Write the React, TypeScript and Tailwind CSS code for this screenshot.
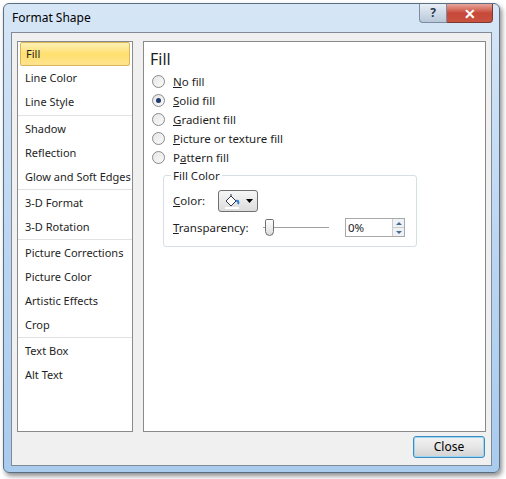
import React from "react";

const groups = [
  ["Fill", "Line Color", "Line Style"],
  ["Shadow", "Reflection", "Glow and Soft Edges"],
  ["3-D Format", "3-D Rotation"],
  ["Picture Corrections", "Picture Color", "Artistic Effects", "Crop"],
  ["Text Box", "Alt Text"],
];

const radios: [string, string, boolean][] = [
  ["N", "o fill", false],
  ["S", "olid fill", true],
  ["G", "radient fill", false],
  ["P", "icture or texture fill", false],
  ["", "Pattern fill", false],
];

function Radio({ checked }: { checked: boolean }) {
  return (
    <span className="w-[13px] h-[13px] rounded-full border border-[#8a8a8a] bg-gradient-to-br from-[#e6e6e6] to-[#fafafa] flex items-center justify-center">
      {checked && <span className="w-[5px] h-[5px] rounded-full bg-[#1f3a6e]" />}
    </span>
  );
}

export default function App() {
  return (
    <div className="w-[506px] h-[479px] bg-white relative" style={{ fontFamily: '"Noto Sans", sans-serif' }}>
      <div className="absolute left-[3px] top-[3px] w-[497px] h-[470px] rounded-[6px] border border-[#5a6e84] bg-gradient-to-b from-[#d6e6f6] via-[#bcd6f2] to-[#a9cbee] shadow-[2px_3px_5px_rgba(0,0,0,0.45)] flex flex-col">
        <div className="h-[28px] flex items-center pl-[8px] text-[12px] text-black relative">
          Format Shape
          <div className="absolute right-[6px] top-0 flex">
            <div className="w-[28px] h-[19px] rounded-bl-[4px] border border-[#7e8c9c] border-t-0 bg-gradient-to-b from-[#e8eef6] to-[#b8c8da] flex items-center justify-center text-[12px] font-bold text-[#2b3a4e]">?</div>
            <div className="w-[46px] h-[19px] rounded-br-[4px] border border-[#7a3a32] border-t-0 border-l-0 bg-gradient-to-b from-[#e8a69a] via-[#c7483a] to-[#c9523f] flex items-center justify-center text-white text-[14px] font-bold">✕</div>
          </div>
        </div>
        <div className="mx-[7px] mb-[6px] flex-1 border border-[#7f8a96] bg-[#f0f0f0] flex flex-col px-[5px] pt-[8px]">
          <div className="flex gap-[10px] h-[391px]">
            <div className="w-[116px] bg-white border border-[#8a8a8a] text-[11px] text-[#1e1e1e] whitespace-nowrap overflow-hidden">
              {groups.map((g, gi) => (
                <div key={gi} className={gi > 0 ? "border-t border-[#e2e2e2] pt-[1px]" : "pb-[1px]"}>
                  {g.map((it) =>
                    it === "Fill" ? (
                      <div key={it} className="mx-[2px] mt-[0px] h-[24px] rounded-[2px] border border-[#d8b45a] bg-gradient-to-b from-[#fff1b4] via-[#ffdf6e] to-[#ffe48e] flex items-center pl-[5px]">Fill</div>
                    ) : (
                      <div key={it} className="h-[24px] flex items-center pl-[7px]">{it}</div>
                    )
                  )}
                </div>
              ))}
            </div>
            <div className="flex-1 bg-white border border-[#8a8a8a] pl-[5px] pt-[5px] text-[11.5px] text-[#1e1e1e]">
              <div className="text-[16px] text-[#1e1e1e] pl-[1px] h-[25px]">Fill</div>
              {radios.map(([u, rest, c], i) => (
                <div key={i} className="h-[19px] flex items-center gap-[8px] pl-[3px]">
                  <Radio checked={c} />
                  {u ? <span><u>{u}</u>{rest}</span> : <span>P<u>a</u>ttern fill</span>}
                </div>
              ))}
              <div className="ml-[14px] mt-[8px] w-[254px] h-[72px] border border-[#d5dfe5] rounded-[3px] relative">
                <span className="absolute -top-[9px] left-[7px] bg-white px-[2px]">Fill Color</span>
                <div className="flex items-center mt-[14px] pl-[9px]">
                  <span className="w-[45px]"><u>C</u>olor:</span>
                  <div className="w-[40px] h-[22px] border border-[#707070] rounded-[3px] bg-gradient-to-b from-[#f6f6f6] to-[#dcdcdc] flex items-center justify-center gap-[5px]">
                    <svg width="17" height="16" viewBox="0 0 17 16">
                      <path d="M2 8 L7 3 L12 8 L7 13 Z" fill="#fff" stroke="#335" strokeWidth="1" />
                      <path d="M7 3 L7 1" stroke="#335" />
                      <path d="M12 8 C14 7 15 9 14 11" stroke="#2a7fd0" strokeWidth="2" fill="none" />
                      <rect x="1" y="14" width="14" height="2" fill="#fff" />
                    </svg>
                    <svg width="7" height="4"><path d="M0 0h7L3.5 4z" fill="#000" /></svg>
                  </div>
                </div>
                <div className="flex items-center mt-[6px] pl-[9px]">
                  <span className="w-[90px]"><u>T</u>ransparency:</span>
                  <div className="relative w-[66px] h-[18px] flex items-center">
                    <div className="w-full h-[1px] bg-[#a0a0a0]" />
                    <div className="absolute left-[2px] top-0 w-[9px] h-[17px] border border-[#707070] rounded-[2px] rounded-b-[5px] bg-gradient-to-b from-white to-[#dcdcdc]" />
                  </div>
                  <div className="ml-[16px] w-[60px] h-[19px] border border-[#a8a8a8] flex items-center justify-between pl-[2px]">
                    <span>0%</span>
                    <div className="w-[12px] h-full flex flex-col border-l border-[#ccc]">
                      <div className="flex-1 flex items-center justify-center bg-[#eef2f6]"><svg width="6" height="3"><path d="M0 3h6L3 0z" fill="#4a6a8c" /></svg></div>
                      <div className="flex-1 flex items-center justify-center bg-[#eef2f6] border-t border-[#ccc]"><svg width="6" height="3"><path d="M0 0h6L3 3z" fill="#4a6a8c" /></svg></div>
                    </div>
                  </div>
                </div>
              </div>
            </div>
          </div>
          <div className="flex justify-end mt-[4px] pr-[1px]">
            <div className="w-[72px] h-[22px] rounded-[3px] border border-[#3c8cc0] bg-gradient-to-b from-[#f2f2f2] via-[#e6e6e6] to-[#d2d2d2] shadow-[inset_0_0_0_1px_#9ad8f4] flex items-center justify-center text-[12px]">Close</div>
          </div>
        </div>
      </div>
    </div>
  );
}
